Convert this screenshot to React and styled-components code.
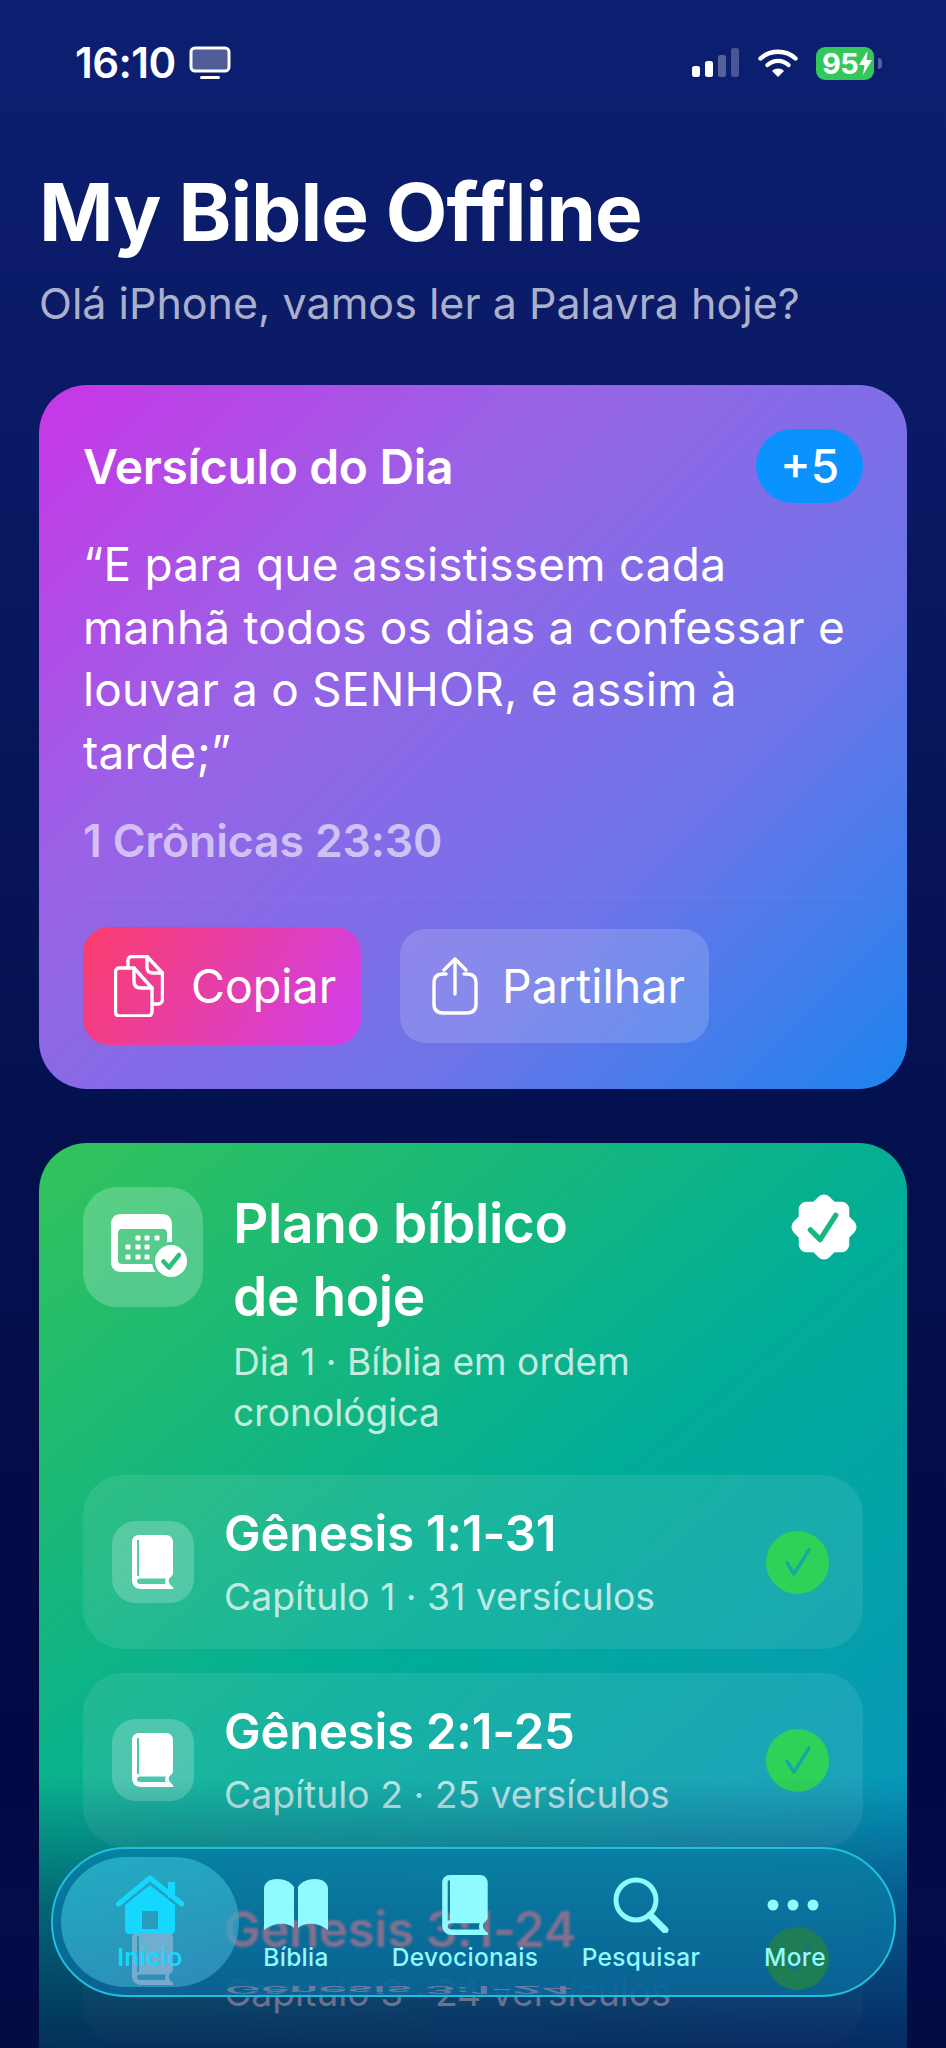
import React from "react";
import styled, { createGlobalStyle } from "styled-components";

const GlobalStyle = createGlobalStyle`
  html, body {
    margin: 0;
    padding: 0;
    background: #020540;
  }
  * {
    box-sizing: border-box;
  }
`;

const Page = styled.div`
  position: relative;
  width: 946px;
  height: 2048px;
  overflow: hidden;
  padding: 0 39px;
  font-family: Inter, "Liberation Sans", sans-serif;
  color: #fff;
  background: linear-gradient(180deg, #0d1f72 0%, #0a1a66 18%, #04114f 55%, #020540 100%);
`;

const StatusBar = styled.div`
  display: flex;
  justify-content: space-between;
  align-items: center;
  height: 34px;
  margin-top: 46px;
  padding: 0 33px 0 36px;
`;

const StatusGroup = styled.div`
  display: flex;
  align-items: center;
  gap: ${(p) => p.$gap || 14}px;
`;

const Time = styled.span`
  font-size: 42px;
  font-weight: 600;
  letter-spacing: -0.6px;
  line-height: 34px;
`;

const Battery = styled.div`
  position: relative;
  display: flex;
  align-items: center;
  gap: 1px;
  width: 58px;
  height: 33px;
  padding-left: 6px;
  border-radius: 9px;
  background: #34c759;
  font-size: 29px;
  font-weight: 700;
  letter-spacing: -0.5px;
`;

const BatteryNub = styled.span`
  position: absolute;
  left: 62px;
  top: 11px;
  width: 4px;
  height: 11px;
  border-radius: 0 4px 4px 0;
  background: rgba(255, 255, 255, 0.3);
`;

const Title = styled.h1`
  margin: 82px 0 0;
  font-size: 80px;
  line-height: 100px;
  font-weight: 700;
  letter-spacing: -1px;
`;

const Subtitle = styled.p`
  margin: 15px 0 0;
  font-size: 43px;
  line-height: 52px;
  font-weight: 400;
  color: rgba(255, 255, 255, 0.66);
`;

const Card = styled.section`
  margin-top: ${(p) => p.$top}px;
  padding: 44px;
  border-radius: 48px;
  background: ${(p) => p.$bg};
`;

const VerseHead = styled.div`
  display: flex;
  justify-content: space-between;
  align-items: center;
  height: 74px;
`;

const VerseTitle = styled.h2`
  margin: 0;
  font-size: 48px;
  font-weight: 600;
  letter-spacing: -0.35px;
`;

const Badge = styled.span`
  display: flex;
  align-items: center;
  justify-content: center;
  width: 107px;
  height: 74px;
  border-radius: 37px;
  background: #0a92ff;
  font-size: 46px;
  font-weight: 500;
`;

const Quote = styled.p`
  max-width: 775px;
  margin: 30px 0 0;
  font-size: 46px;
  line-height: 62.500px;
  font-weight: 400;
  letter-spacing: 0.2px;
`;

const Reference = styled.p`
  margin: 28px 0 0;
  font-size: 44.500px;
  line-height: 60px;
  font-weight: 600;
  letter-spacing: -0.1px;
  color: rgba(255, 255, 255, 0.6);
`;

const Actions = styled.div`
  display: flex;
  align-items: center;
  gap: 39px;
  margin-top: 25px;
  padding-top: 30px;
  border-top: 1px solid rgba(255, 255, 255, 0.04);
`;

const ActionButton = styled.button`
  display: flex;
  align-items: center;
  gap: ${(p) => (p.$primary ? 27 : 24)}px;
  width: ${(p) => p.$width}px;
  height: ${(p) => (p.$primary ? 118 : 114)}px;
  padding: 0 0 0 ${(p) => (p.$primary ? 31 : 32)}px;
  border: 0;
  border-radius: 26px;
  background: ${(p) =>
    p.$primary
      ? "linear-gradient(120deg, #fb3d6b 0%, #cf3fec 100%)"
      : "rgba(255, 255, 255, 0.16)"};
  color: #fff;
  font-family: inherit;
  font-size: 46.500px;
  font-weight: 400;
`;

const PlanHead = styled.div`
  display: flex;
  align-items: flex-start;
  gap: 30px;
`;

const IconTile = styled.div`
  flex: none;
  display: flex;
  align-items: center;
  justify-content: center;
  width: ${(p) => p.$size}px;
  height: ${(p) => p.$size}px;
  border-radius: ${(p) => p.$radius}px;
  background: rgba(255, 255, 255, 0.22);
`;

const PlanText = styled.div`
  flex: 1;
`;

const PlanTitle = styled.h2`
  margin: 0;
  width: 400px;
  font-size: 55px;
  line-height: 73px;
  font-weight: 600;
  letter-spacing: -0.4px;
`;

const PlanSub = styled.p`
  margin: 3px 0 0;
  width: 430px;
  font-size: 37.200px;
  line-height: 51px;
  color: rgba(255, 255, 255, 0.75);
`;

const VerifiedWrap = styled.div`
  flex: none;
  margin: 5px 4px 0 0;
`;

const Rows = styled.div`
  display: flex;
  flex-direction: column;
  gap: 24px;
  margin-top: 37px;
`;

const Row = styled.div`
  display: flex;
  align-items: center;
  height: 174px;
  padding: 0 34px 0 29px;
  border-radius: 40px;
  background: rgba(255, 255, 255, 0.09);
`;

const RowText = styled.div`
  flex: 1;
  margin-left: 30px;
`;

// the third row sits under the glass tab bar: its title, book and tick show through
const RowTitle = styled.div`
  font-size: 49px;
  line-height: 56px;
  font-weight: 600;
  letter-spacing: -0.2px;
  color: #fff;
  ${(p) =>
    p.$ghost &&
    `
    position: relative;
    z-index: 2;
    color: #83708f;
    filter: blur(0.9px);
  `}
`;

const RowSub = styled.div`
  margin-top: 13px;
  font-size: 37.300px;
  line-height: 44px;
  color: rgba(255, 255, 255, 0.72);
  ${(p) =>
    p.$ghost &&
    `
    position: relative;
    color: #6f6f8e;
  `}
`;

const RowBook = styled.div`
  display: flex;
  position: ${(p) => (p.$ghost ? "relative" : "static")};
  z-index: ${(p) => (p.$ghost ? 2 : "auto")};
`;

const CheckDot = styled.div`
  flex: none;
  display: flex;
  align-items: center;
  justify-content: center;
  width: 63px;
  height: 63px;
  border-radius: 50%;
  background: ${(p) => (p.$ghost ? "#1f7d55" : "#30d158")};
  position: ${(p) => (p.$ghost ? "relative" : "static")};
  z-index: ${(p) => (p.$ghost ? 2 : "auto")};
`;

const BottomFade = styled.div`
  position: absolute;
  left: 0;
  right: 0;
  bottom: 0;
  height: 270px;
  pointer-events: none;
  background: linear-gradient(180deg, rgba(4, 20, 80, 0) 0%, rgba(4, 20, 80, 0.45) 45%, rgba(4, 14, 70, 0.78) 100%);
`;

const Nav = styled.nav`
  position: absolute;
  left: 51px;
  top: 1847px;
  display: grid;
  grid-template-columns: 178px 114px 224px 128px 180px;
  width: 845px;
  height: 150px;
  padding: 8px 8px;
  overflow: hidden;
  border: 2px solid #22bedd;
  border-radius: 75px;
  background: linear-gradient(180deg, rgba(8, 128, 165, 0.9) 0%, rgba(10, 100, 150, 0.92) 100%);
`;

const MirrorText = styled.span`
  position: absolute;
  left: 172px;
  top: ${(p) => (p.$flip ? 88 : -12)}px;
  font-size: 48px;
  line-height: 48px;
  font-weight: 600;
  white-space: nowrap;
  color: rgba(190, 150, 180, 0.5);
  transform-origin: ${(p) => (p.$flip ? "left bottom" : "left top")};
  transform: scaleY(${(p) => (p.$flip ? -0.2 : 0.3)});
`;

const NavItem = styled.div`
  position: relative;
  z-index: 3;
  display: flex;
  flex-direction: column;
  align-items: center;
  height: 130px;
  padding-top: 18px;
  border-radius: 65px;
  color: ${(p) => (p.$active ? "#14d8ff" : "#8ffaff")};
  background: ${(p) =>
    p.$active
      ? "linear-gradient(160deg, rgba(40, 190, 205, 0.75) 0%, rgba(70, 160, 205, 0.62) 100%)"
      : "transparent"};
`;

const NavIcon = styled.div`
  display: flex;
  align-items: center;
  justify-content: center;
  height: 60px;
`;

const NavLabel = styled.span`
  margin-top: 6px;
  font-size: 24.500px;
  line-height: 32px;
  font-weight: ${(p) => (p.$active ? 600 : 500)};
  letter-spacing: 0.3px;
  white-space: nowrap;
`;

const Monitor = () => (
  <svg width="42" height="34" viewBox="0 0 42 34">
    <rect x="2" y="2" width="38" height="23" rx="4" fill="rgba(255,255,255,.28)" stroke="#fff" strokeWidth="3" />
    <rect x="11" y="30" width="20" height="3" rx="1.5" fill="#fff" />
  </svg>
);

const Signal = () => (
  <svg width="48" height="30" viewBox="0 0 48 30">
    <rect x="0" y="18" width="8" height="11" rx="2.5" fill="#fff" />
    <rect x="13" y="13" width="8" height="16" rx="2.5" fill="#fff" />
    <rect x="26" y="7" width="8" height="22" rx="2.5" fill="rgba(255,255,255,.3)" />
    <rect x="39" y="0" width="8" height="29" rx="2.5" fill="rgba(255,255,255,.25)" />
  </svg>
);

const Wifi = () => (
  <svg width="40" height="30" viewBox="0 0 40 30" fill="none" stroke="#fff" strokeLinecap="round">
    <path d="M2.5 10.5C12 1.5 28 1.5 37.5 10.5" strokeWidth="4.4" />
    <path d="M9.5 17C15.5 11.5 24.5 11.5 30.5 17" strokeWidth="4.4" />
    <path d="M14 23L20 29L26 23C22.5 19.8 17.5 19.8 14 23Z" fill="#fff" stroke="none" />
  </svg>
);

const Bolt = () => (
  <svg width="13" height="24" viewBox="0 0 13 24">
    <path d="M8.5 0L0 14H5.5L4 24L13 9H7.5Z" fill="#fff" />
  </svg>
);

const CopyIcon = () => (
  <svg width="50" height="62" viewBox="0 0 50 62" fill="none" stroke="#fff" strokeWidth="3.4" strokeLinejoin="round" strokeLinecap="round">
    <path d="M14 13V5C14 3 16 1.500 18 1.500H33L48.500 18V44C48.500 47 46.500 49 44 49H39" />
    <path d="M33 1.500V12C33 16 35 18 39 18H48.500" />
    <path d="M5 13H20L38 33V57C38 59.500 36 61 34 61H5C3 61 1.500 59.500 1.500 57V17C1.500 15 3 13 5 13Z" />
    <path d="M20 13V26C20 30.500 22.500 33 27 33H38" />
  </svg>
);

const ShareIcon = () => (
  <svg width="46" height="58" viewBox="0 0 46 58" fill="none" stroke="#fff" strokeWidth="3.4" strokeLinecap="round" strokeLinejoin="round">
    <path d="M14 17H11C5 17 2 20 2 26V47C2 53 5 56 11 56H35C41 56 44 53 44 47V26C44 20 41 17 35 17H32" />
    <path d="M23 37V2.500" />
    <path d="M12 13L23 2L34 13" />
  </svg>
);

const CalendarIcon = () => (
  <svg width="91" height="66" viewBox="-13 0 91 66">
    <mask id="calendar-cut">
      <rect x="-13" width="91" height="66" fill="#fff" />
      <circle cx="60" cy="47" r="19" fill="#000" />
    </mask>
    <g mask="url(#calendar-cut)" fill="#fff">
      <path
        fillRule="evenodd"
        d="M10 0H51C57 0 61 4 61 10V48C61 54 57 58 51 58H10C4 58 0 54 0 48V10C0 4 4 0 10 0ZM11 15C8.500 15 7 16.500 7 19V46C7 48.500 8.500 50 11 50H52C54.500 50 56 48.500 56 46V19C56 16.500 54.500 15 52 15Z"
      />
      {[
        [27, 24],
        [36, 24],
        [46, 24],
        [17, 33],
        [27, 33],
        [36, 33],
        [17, 43],
        [27, 43],
        [36, 43],
      ].map(([x, y]) => (
        <rect key={`${x}-${y}`} x={x - 2.5} y={y - 2.5} width="5" height="5" rx="1" />
      ))}
    </g>
    <circle cx="60" cy="47" r="16" fill="#fff" />
    <path d="M52.500 47.500L58 53.500L68 41" fill="none" stroke="#2dbd7c" strokeWidth="4.500" strokeLinecap="round" strokeLinejoin="round" />
  </svg>
);

const VerifiedIcon = () => (
  <svg width="70" height="70" viewBox="0 0 72 72">
    <rect x="10" y="10" width="52" height="52" rx="8" fill="#fff" />
    <rect x="10" y="10" width="52" height="52" rx="8" fill="#fff" transform="rotate(45 36 36)" />
    <path d="M22 39L32 49L48 24" fill="none" stroke="#1ab585" strokeWidth="5.500" strokeLinecap="round" strokeLinejoin="round" />
  </svg>
);

// same closed book for the rows and the Devocionais tab, slots are cut out
const BookIcon = ({ width = 42, height = 54, color = "currentColor" }) => (
  <svg width={width} height={height} viewBox="0 0 42 54">
    <path
      fillRule="evenodd"
      fill={color}
      d="M7 0H34C38 0 41 3 41 7V38C41 41 38 42 37 44C36 47 38 50 41 52C42 53 41.500 54 40 54H9C3 54 0 50 0 45V7C0 3 3 0 7 0ZM5 5V41H7V5ZM8 43.500C6 43.500 5 44.500 5 46C5 48 6 49 8 49H33.500C33 47 33 45 34 43.500Z"
    />
  </svg>
);

const Check = ({ color }) => (
  <svg width="32" height="32" viewBox="0 0 32 32">
    <path d="M5 17L12 28L27 4" fill="none" stroke={color} strokeWidth="3.500" strokeLinecap="round" strokeLinejoin="round" />
  </svg>
);

const HomeIcon = () => (
  <svg width="68" height="60" viewBox="0 0 68 60">
    <path d="M2.500 29L34 3L66 29" fill="none" stroke="currentColor" strokeWidth="5" strokeLinecap="round" strokeLinejoin="round" />
    <rect x="52" y="7" width="7" height="16" rx="1" fill="currentColor" />
    <path d="M34 10L59 30V54C59 57 57 59 54 59H14C11 59 9 57 9 54V30ZM26 36V54H42V36Z" fill="currentColor" fillRule="evenodd" />
  </svg>
);

const BibleIcon = () => (
  <svg width="66" height="52" viewBox="0 0 66 52">
    <path d="M31 8V49C28 46 22 44 14 45C9 46 5 48 1 51V10C1 4 6 0 14 0C22 0 28 3 31 8Z" fill="currentColor" />
    <path d="M35 8V49C38 46 44 44 52 45C57 46 61 48 65 51V10C65 4 60 0 52 0C44 0 38 3 35 8Z" fill="currentColor" />
  </svg>
);

const SearchIcon = () => (
  <svg width="56" height="56" viewBox="0 0 56 56" fill="none" stroke="currentColor" strokeLinecap="round">
    <circle cx="23" cy="23" r="20" strokeWidth="5" />
    <path d="M37 38L52 53" strokeWidth="7" />
  </svg>
);

const DotsIcon = () => (
  <svg width="56" height="12" viewBox="0 0 56 12" fill="currentColor">
    <circle cx="6" cy="6" r="5.500" />
    <circle cx="26" cy="6" r="5.500" />
    <circle cx="46" cy="6" r="5.500" />
  </svg>
);

const readings = [
  { title: "Gênesis 1:1-31", sub: "Capítulo 1 · 31 versículos" },
  { title: "Gênesis 2:1-25", sub: "Capítulo 2 · 25 versículos" },
  { title: "Gênesis 3:1-24", sub: "Capítulo 3 · 24 versículos", ghost: true },
];

const tabs = [
  { label: "Início", icon: <HomeIcon />, active: true },
  { label: "Bíblia", icon: <BibleIcon /> },
  { label: "Devocionais", icon: <BookIcon width={47} height={60} /> },
  { label: "Pesquisar", icon: <SearchIcon /> },
  { label: "More", icon: <DotsIcon /> },
];

export default function App() {
  return (
    <Page>
      <GlobalStyle />
      <BottomFade />
      <StatusBar>
        <StatusGroup>
          <Time>16:10</Time>
          <Monitor />
        </StatusGroup>
        <StatusGroup $gap={18}>
          <Signal />
          <Wifi />
          <Battery>
            95
            <Bolt />
            <BatteryNub />
          </Battery>
        </StatusGroup>
      </StatusBar>

      <Title>My Bible Offline</Title>
      <Subtitle>Olá iPhone, vamos ler a Palavra hoje?</Subtitle>

      <Card $top={56} $bg="linear-gradient(135deg, #c935e6 0%, #9a62e6 32%, #6f74e8 68%, #1d84ee 100%)">
        <VerseHead>
          <VerseTitle>Versículo do Dia</VerseTitle>
          <Badge>+5</Badge>
        </VerseHead>
        <Quote>
          “E para que assistissem cada manhã todos os dias a confessar e louvar a o SENHOR, e assim à tarde;”
        </Quote>
        <Reference>1 Crônicas 23:30</Reference>
        <Actions>
          <ActionButton $primary $width={278}>
            <CopyIcon />
            Copiar
          </ActionButton>
          <ActionButton $width={309}>
            <ShareIcon />
            Partilhar
          </ActionButton>
        </Actions>
      </Card>

      <Card $top={54} $bg="linear-gradient(140deg, #32c35a 0%, #00ad98 48%, #0a8cc8 100%)">
        <PlanHead>
          <IconTile $size={120} $radius={34}>
            <CalendarIcon />
          </IconTile>
          <PlanText>
            <PlanTitle>Plano bíblico de hoje</PlanTitle>
            <PlanSub>Dia 1 · Bíblia em ordem cronológica</PlanSub>
          </PlanText>
          <VerifiedWrap>
            <VerifiedIcon />
          </VerifiedWrap>
        </PlanHead>
        <Rows>
          {readings.map((r) => (
            <Row key={r.title}>
              <IconTile $size={82} $radius={24}>
                <RowBook $ghost={r.ghost}>
                  <BookIcon color={r.ghost ? "#e0b0cc" : "#fff"} />
                </RowBook>
              </IconTile>
              <RowText>
                <RowTitle $ghost={r.ghost}>{r.title}</RowTitle>
                <RowSub $ghost={r.ghost}>{r.sub}</RowSub>
              </RowText>
              <CheckDot $ghost={r.ghost}>
                <Check color={r.ghost ? "#1c6f8a" : "#17a9a0"} />
              </CheckDot>
            </Row>
          ))}
        </Rows>
      </Card>

      <Nav>
        <MirrorText aria-hidden>Gênesis 3:1-24</MirrorText>
        <MirrorText aria-hidden $flip>
          Gênesis 3:1-24
        </MirrorText>
        {tabs.map((t) => (
          <NavItem key={t.label} $active={t.active}>
            <NavIcon>{t.icon}</NavIcon>
            <NavLabel $active={t.active}>{t.label}</NavLabel>
          </NavItem>
        ))}
      </Nav>
    </Page>
  );
}
